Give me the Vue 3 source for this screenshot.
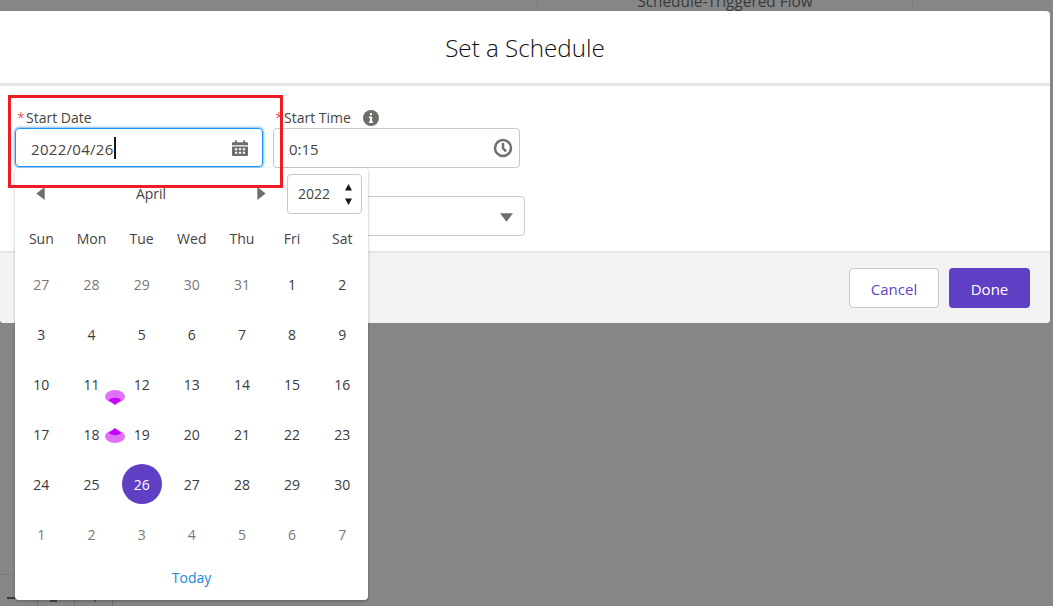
<script setup>
import { computed } from "vue";

const weekDays = ["Sun", "Mon", "Tue", "Wed", "Thu", "Fri", "Sat"];

const prevMonth = [27, 28, 29, 30, 31];
const nextMonth = [1, 2, 3, 4, 5, 6, 7];

const days = computed(() => {
  const list = [];
  prevMonth.forEach((d) => list.push({ label: d, muted: true }));
  for (let d = 1; d <= 30; d++) {
    list.push({ label: d, muted: false, selected: d === 26 });
  }
  nextMonth.forEach((d) => list.push({ label: d, muted: true }));
  return list;
});
</script>

<template>
  <div class="page">
    <div class="backdrop-node">
      <span>Schedule-Triggered Flow</span>
    </div>
    <div class="backdrop-toolbar">
      <i class="dash"></i>
      <i class="cell"></i>
      <i class="cell"><u class="mark wide"></u></i>
      <i class="cell"><u class="mark"></u></i>
    </div>

    <section class="modal">
      <header class="modal-head">
        <h2>Set a Schedule</h2>
      </header>

      <div class="modal-body">
        <div class="row">
          <div class="field">
            <label><abbr>*</abbr>Start Date</label>
            <div class="input focused">
              <span class="value">2022/04/26</span><span class="caret"></span>
              <svg class="input-icon calendar" viewBox="0 0 16 16">
                <path fill="#706e6b" d="M0 6.400h16v8.600a1 1 0 0 1-1 1H1a1 1 0 0 1-1-1z" />
                <path fill="#706e6b" d="M1 2.200h2V1a.9.9 0 0 1 1.800 0v1.200h6.400V1a.9.9 0 0 1 1.800 0v1.200h2a1 1 0 0 1 1 1v2H0v-2a1 1 0 0 1 1-1z" />
                <path fill="#fff" d="M3 8.200h2.200v2H3zM6.900 8.200h2.200v2H6.900zM10.800 8.200H13v2h-2.200zM3 11.800h2.200v2H3zM6.900 11.800h2.200v2H6.900zM10.800 11.800H13v2h-2.200z" />
              </svg>
            </div>
          </div>

          <div class="field">
            <label>
              <abbr>*</abbr>Start Time
              <svg class="info" viewBox="0 0 16 16">
                <circle cx="8" cy="8" r="8" fill="#706e6b" />
                <rect x="6.9" y="3" width="2.2" height="2.2" rx="1" fill="#fff" />
                <path fill="#fff" d="M5.900 6.600h3.200v5h1v1.400H5.900v-1.400h1v-3.600h-1z" />
              </svg>
            </label>
            <div class="input">
              <span class="value">0:15</span>
              <svg class="input-icon clock" viewBox="0 0 20 20">
                <circle cx="10" cy="10" r="8" fill="none" stroke="#706e6b" stroke-width="2.500" />
                <path d="M10 5v5.300l3 3" fill="none" stroke="#706e6b" stroke-width="2.500" />
              </svg>
            </div>
          </div>
        </div>

        <div class="row select-row">
          <div class="select">
            <svg class="select-arrow" viewBox="0 0 14 9">
              <path d="M0 0h14L7 9z" fill="#706e6b" />
            </svg>
          </div>
        </div>
      </div>

      <footer class="modal-foot">
        <button class="btn cancel">Cancel</button>
        <button class="btn done">Done</button>
      </footer>
    </section>

    <div class="picker">
      <div class="picker-head">
        <div class="month-nav">
          <svg class="nav-arrow" viewBox="0 0 9 14"><path d="M9 0v14L0 7z" fill="#706e6b" /></svg>
          <span class="month">April</span>
          <svg class="nav-arrow" viewBox="0 0 9 14"><path d="M0 0v14l9-7z" fill="#706e6b" /></svg>
        </div>
        <div class="year">
          <span>2022</span>
          <svg class="spinner" viewBox="0 0 7 21">
            <path d="M3.500 0L7 6.500H0zM0 14.500h7L3.500 21z" fill="#181818" />
          </svg>
        </div>
      </div>

      <div class="grid week">
        <span v-for="d in weekDays" :key="d">{{ d }}</span>
      </div>
      <div class="grid dates">
        <span
          v-for="(d, i) in days"
          :key="i"
          :class="{ muted: d.muted, selected: d.selected }"
        >
          <b v-if="d.selected">{{ d.label }}</b>
          <template v-else>{{ d.label }}</template>
        </span>
      </div>
      <div class="today">Today</div>

      <svg class="pin pin-top" viewBox="0 0 20 15">
        <ellipse cx="10" cy="6.500" rx="10" ry="6.500" fill="#e070f5" />
        <path d="M3.500 10Q10 5.500 16.500 10L10 15z" fill="#c800ff" />
      </svg>
      <svg class="pin pin-bottom" viewBox="0 0 20 15">
        <ellipse cx="10" cy="8.500" rx="10" ry="6.500" fill="#e070f5" />
        <path d="M3.500 5Q10 9.500 16.500 5L10 0z" fill="#c800ff" />
      </svg>
    </div>

    <div class="callout"></div>
  </div>
</template>

<style scoped>
* {
  box-sizing: border-box;
}

.page {
  position: relative;
  width: 1053px;
  height: 606px;
  overflow: hidden;
  background: #868686;
  color: #181818;
  font-family: "Open Sans", "Noto Sans", Arial, sans-serif;
  font-size: 14px;
}

.backdrop-node {
  position: absolute;
  left: 537px;
  top: -8px;
  width: 376px;
  height: 19px;
  border-left: 1px solid #7b7b7b;
  border-right: 1px solid #7b7b7b;
  text-align: center;
  color: #3a3a3a;
  font-size: 15.400px;
  line-height: 19px;
}

.backdrop-toolbar {
  position: absolute;
  left: 0;
  top: 574px;
  height: 32px;
  width: 113px;
  display: flex;
  border-top: 1px solid #7b7b7b;
}

.backdrop-toolbar .dash {
  position: absolute;
  left: 7px;
  top: 22px;
  width: 8px;
  height: 2px;
  background: #3a3a3a;
}

.backdrop-toolbar .cell {
  position: relative;
  width: 39px;
  border-right: 1px solid #6f6f6f;
}

.backdrop-toolbar .cell:first-of-type {
  width: 35px;
}

.mark {
  position: absolute;
  left: 19px;
  top: 25px;
  width: 2px;
  height: 2px;
  background: #5a5a5a;
}

.mark.wide {
  left: 12px;
  width: 7px;
  background: #444;
}

.modal {
  position: absolute;
  left: 0;
  top: 11px;
  width: 1050px;
  height: 312px;
  border-radius: 0 4px 4px 4px;
  background: #fff;
  overflow: hidden;
  display: flex;
  flex-direction: column;
}

.modal-head {
  height: 75px;
  border-bottom: 3px solid #e5e5e5;
  display: flex;
  align-items: center;
  justify-content: center;
}

.modal-head h2 {
  margin: 1px 0 0;
  font-size: 24.200px;
  font-weight: 300;
  line-height: 28px;
  color: #111;
}

.modal-body {
  flex: 1;
  padding: 21px 0 0 15px;
}

.row {
  display: flex;
  gap: 10px;
}

.field {
  width: 248px;
}

.field label {
  display: flex;
  align-items: center;
  height: 21px;
  color: #444;
  font-size: 14px;
}

.field label abbr {
  color: #ea001e;
  width: 11px;
  padding-left: 2px;
  flex: none;
  font-weight: 300;
}

.field + .field {
  width: 247px;
}

.info {
  width: 16px;
  height: 16px;
  margin-left: 12px;
}

.input {
  position: relative;
  height: 40px;
  border: 1px solid #c9c9c9;
  border-radius: 4px;
  display: flex;
  align-items: center;
  padding: 2px 0 0 15px;
  font-size: 15px;
  color: #444;
}

.focused {
  height: 39px;
  border-color: #1b96ff;
  box-shadow: 0 0 3px #0176d3;
}

.focused .value {
  letter-spacing: 0.3px;
}

.caret {
  width: 2px;
  height: 22px;
  margin-top: -2px;
  background: #181818;
}

.input-icon {
  position: absolute;
  top: 50%;
  transform: translateY(-50%);
}

.calendar {
  right: 14px;
  width: 16px;
  height: 16px;
}

.clock {
  right: 6px;
  width: 20px;
  height: 20px;
}

.select-row {
  margin-top: 28px;
  justify-content: flex-end;
  width: 510px;
}

.select {
  position: relative;
  width: 252px;
  height: 40px;
  border: 1px solid #c9c9c9;
  border-radius: 4px;
}

.select-arrow {
  position: absolute;
  right: 11px;
  top: 16px;
  width: 13px;
  height: 9px;
}

.modal-foot {
  height: 72px;
  background: #f3f3f3;
  border-top: 2px solid #e5e5e5;
  display: flex;
  justify-content: flex-end;
  align-items: center;
  gap: 10px;
  padding: 0 20px 0 0;
}

.btn {
  height: 40px;
  border-radius: 4px;
  font-family: inherit;
  font-size: 15px;
  padding: 2px 0 0;
}

.cancel {
  width: 90px;
  background: #fff;
  border: 1px solid #c9c9c9;
  color: #5f3fc4;
}

.done {
  width: 81px;
  background: #5f3fc4;
  border: 0;
  color: #fff;
}

.picker {
  position: absolute;
  left: 15px;
  top: 168px;
  width: 353px;
  height: 432px;
  background: #fff;
  border-radius: 4px;
  box-shadow: 0 1px 3px rgba(0, 0, 0, 0.3);
}

.picker-head {
  display: flex;
  height: 46px;
  padding: 6px 6px 0 0;
  justify-content: space-between;
}

.month-nav {
  width: 251px;
  display: flex;
  align-items: center;
  justify-content: space-between;
  height: 40px;
  padding: 0 0 2px 21px;
}

.nav-arrow {
  width: 9px;
  height: 13px;
}

.month {
  color: #444;
}

.year {
  width: 75px;
  height: 40px;
  border: 1px solid #c9c9c9;
  border-radius: 4px;
  display: flex;
  align-items: center;
  justify-content: space-between;
  padding: 0 9px 0 10px;
  color: #444;
}

.year span {
  margin-bottom: 2px;
}

.spinner {
  width: 7px;
  height: 21px;
}

.grid {
  display: grid;
  grid-template-columns: repeat(7, 50.150px);
  padding-left: 1.300px;
  text-align: center;
}

.week {
  height: 45px;
  padding-top: 4px;
  align-items: center;
  color: #444;
}

.dates {
  grid-auto-rows: 50px;
  align-items: center;
  justify-items: center;
  color: #3a3a3a;
}

.dates .muted {
  color: #7a7876;
}

.dates .selected b {
  display: flex;
  width: 40px;
  height: 40px;
  border-radius: 50%;
  background: #5f3fc4;
  color: #fff;
  align-items: center;
  justify-content: center;
  font-weight: 500;
}

.today {
  text-align: center;
  color: #1589dc;
  margin-top: 9px;
  line-height: 20px;
}

.pin {
  position: absolute;
  left: 90px;
  width: 20px;
  height: 15px;
}

.pin-top {
  top: 222px;
}

.pin-bottom {
  top: 260px;
}

.callout {
  position: absolute;
  left: 8px;
  top: 95px;
  width: 275px;
  height: 93px;
  border: 3px solid #ee1c25;
}
</style>

<style>
html,
body {
  margin: 0;
  background: #868686;
}
</style>
